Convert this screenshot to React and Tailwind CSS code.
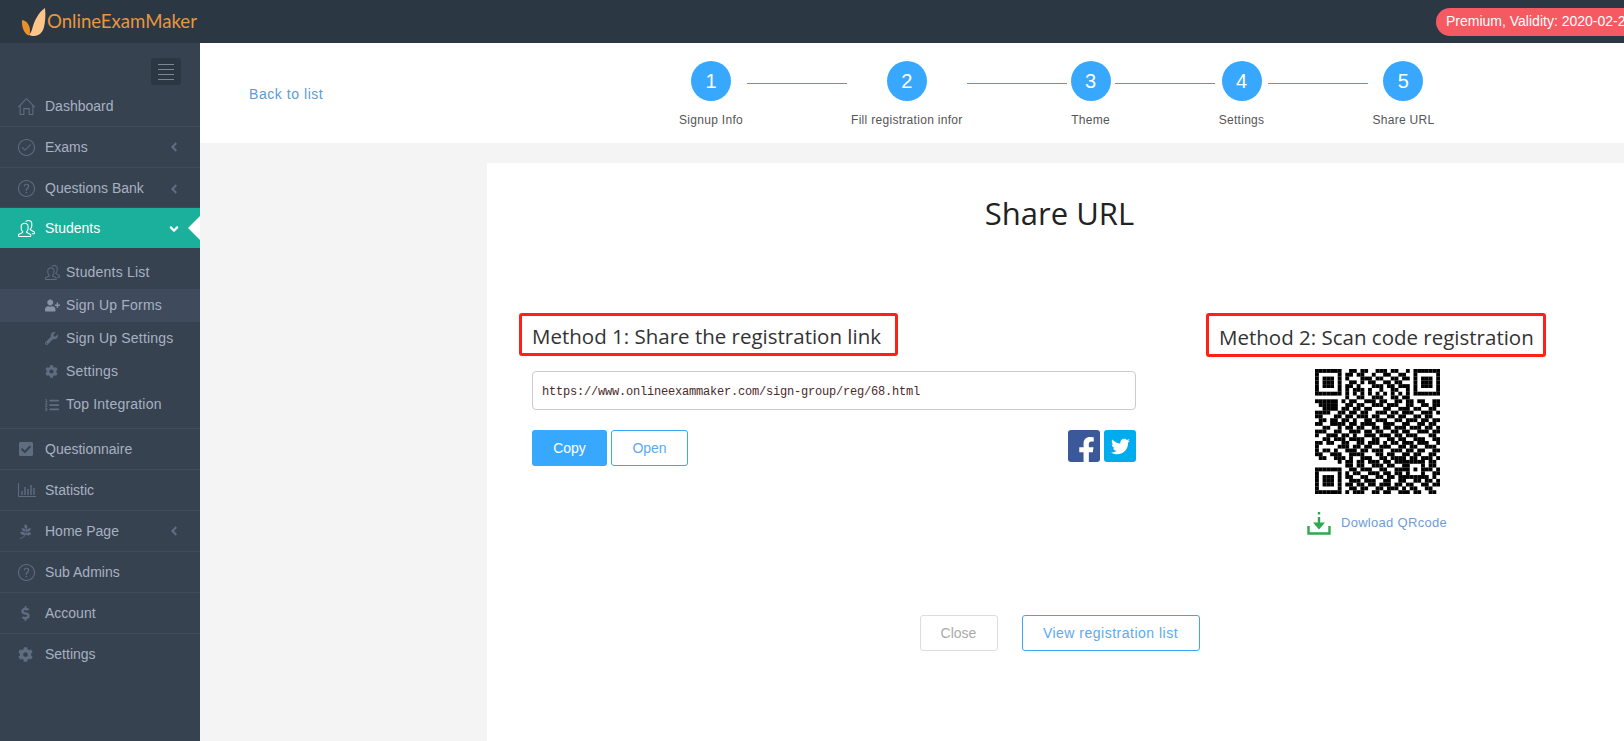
import React from 'react';
import { FaAngleLeft, FaAngleDown, FaCheckSquare, FaCog, FaDollarSign, FaFacebookF, FaListOl, FaPagelines, FaTwitter, FaUserPlus, FaWrench } from 'react-icons/fa';
import { SlCheck, SlHome, SlPeople, SlQuestion } from 'react-icons/sl';

const BarsIcon = ({ className }) => (
  <svg className={className} viewBox="0 0 18 14" width="18" height="14" fill="none" stroke="currentColor" strokeWidth="1">
    <path d="M.5 0v13.5H18" />
    <path d="M4 12V8M7 12V4M10 12V6M13 12V2M16 12V5" strokeWidth="1.4" />
  </svg>
);

const menuTop = [
  { label: 'Dashboard', icon: SlHome, size: 'text-[17px]' },
  { label: 'Exams', icon: SlCheck, size: 'text-[17px]', arrow: true },
  { label: 'Questions Bank', icon: SlQuestion, size: 'text-[17px]', arrow: true, short: true },
];

const subMenu = [
  { label: 'Students List', icon: SlPeople, size: 'text-[15px]' },
  { label: 'Sign Up Forms', icon: FaUserPlus, size: 'text-[15px]', active: true },
  { label: 'Sign Up Settings', icon: FaWrench, size: 'text-[13px]' },
  { label: 'Settings', icon: FaCog, size: 'text-[13px]' },
  { label: 'Top Integration', icon: FaListOl, size: 'text-[14px]' },
];

const menuBottom = [
  { label: 'Questionnaire', icon: FaCheckSquare, size: 'text-[16px]' },
  { label: 'Statistic', icon: BarsIcon, size: '' },
  { label: 'Home Page', icon: FaPagelines, size: 'text-[15px]', arrow: true },
  { label: 'Sub Admins', icon: SlQuestion, size: 'text-[17px]' },
  { label: 'Account', icon: FaDollarSign, size: 'text-[15px]' },
  { label: 'Settings', icon: FaCog, size: 'text-[15px]', last: true },
];

const steps = ['Signup Info', 'Fill registration infor', 'Theme', 'Settings', 'Share URL'];

const qrRows = [
  '111111100110110011101100101111111',
  '100000101101100100110011000100000'.slice(0, 26) + '1000001',
  '101110101000111011001101101011101',
  '101110100110101100110110001011101',
  '101110101101000111011011101011101',
  '100000101011101001001100101000001',
  '111111101010101010101010101111111',
  '000000001001100111001101100000000',
  '111111010110011101100110110110011',
  '011111001101100111011100110011011',
  '001111011011011000110011101100110',
  '111100110110110011101101110011101',
  '110001101101110110011011001101100',
  '011011011010011011100110111011011',
  '110011110110111100111001100110110',
  '001100101101100110110111011101101',
  '111001100111011011001101100111011',
  '100111011010011101110110111000110',
  '001101110111100110011011001110011',
  '110110011001101110101101110111001',
  '100000111011011001110011011001110',
  '101101001110110111001110110110011',
  '110011100111100011011001101100110',
  '011001110100111001101111011011101',
  '000000101101101110110111111110110',
  '000000001101100111011001100010110',
  '111111100110111001100111101011101',
  '100000101011001110110110100010011',
  '101110101100110011011011111111010',
  '101110100111011100110011001101101',
  '101110101101101101110110110011011',
  '100000100110110011011101011001100',
  '111111101011100110110011101100110',
];

const QrCode = () => (
  <svg width="125" height="125" viewBox="0 0 33 33" fill="#000">
    {qrRows.map((row, y) =>
      row.split('').map((cell, x) => (cell === '1' ? <rect key={`${x}-${y}`} x={x} y={y} width="1.02" height="1.02" /> : null))
    )}
  </svg>
);

const LeafLogo = () => (
  <svg width="26" height="30" viewBox="0 0 26 30">
    <path d="M1 13C6 14 9 18 9 24c0 2-.4 3.500-1 4.500C3 27 .5 20 1 13z" fill="#ef8f2a" />
    <path d="M24 1c1 8 0 14-1 19-1 5-5 9-10 9-2 0-4-.5-5-1 2-2 3-5 4-9 1-3 2-6 4-9 2-4 5-7 8-9z" fill="#fcc68a" />
  </svg>
);

const MenuRow = ({ item, active }) => {
  const Icon = item.icon;
  return (
    <div className={`relative flex items-center pl-[18px] pr-[19px] border-b ${active || item.short ? 'h-[40px] pt-[2px]' : 'h-[41px]'} ${active ? 'bg-[#1bb09b] text-white border-transparent' : 'text-[#a7b1c2] border-[#414c5b]'} ${item.last ? 'border-transparent' : ''}`}>
      <span className={`w-[27px] shrink-0 flex ${active ? 'text-white' : 'text-[#5f6d80]'} ${item.size}`}>
        <Icon />
      </span>
      <span className="text-[14px]">{item.label}</span>
      {item.arrow && <FaAngleLeft className="ml-auto text-[14px] text-[#5f6d80]" />}
      {active && <FaAngleDown className="ml-auto text-[14px] text-white" />}
      {active && <span className="absolute right-0 top-[8px] w-0 h-0 border-y-[12px] border-r-[12px] border-y-transparent border-r-white" />}
    </div>
  );
};

const App = () => {
  return (
    <div className="w-[1624px] h-[741px] overflow-hidden flex flex-col font-['Liberation_Sans',sans-serif] bg-white">
      {/* Top bar */}
      <div className="h-[43px] shrink-0 bg-[#2c3744] flex items-center">
        <div className="w-[1436px] shrink-0 flex items-center pl-[21px]">
          <LeafLogo />
          <span className="text-[18.6px] leading-none text-[#e8963f] font-['Lato',sans-serif]">OnlineExamMaker</span>
        </div>
        <div className="h-[28px] shrink-0 pl-[10px] pr-6 rounded-l-full bg-[#f55a63] text-white text-[14px] flex items-center whitespace-nowrap">
          Premium, Validity: 2020-02-28
        </div>
      </div>

      <div className="flex flex-1 min-h-0">
        {/* Sidebar */}
        <div className="w-[200px] shrink-0 bg-[#374250]">
          <div className="h-[43px] pt-[15px] pl-[151px]">
            <div className="w-[30px] h-[27px] rounded-[3px] bg-[#2c3744] flex flex-col items-center justify-center gap-[4px]">
              <span className="w-4 h-px bg-[#7b8797]" />
              <span className="w-4 h-px bg-[#7b8797]" />
              <span className="w-4 h-px bg-[#7b8797]" />
              <span className="w-4 h-px bg-[#7b8797]" />
            </div>
          </div>
          {menuTop.map((item) => (
            <MenuRow key={item.label} item={item} />
          ))}
          <MenuRow item={{ label: 'Students', icon: SlPeople, size: 'text-[17px]' }} active />
          <div className="pt-[8px] pb-[7px] border-b border-[#414c5b]">
            {subMenu.map((item) => {
              const Icon = item.icon;
              return (
                <div key={item.label} className={`h-[33px] flex items-center pl-[45px] text-[14px] tracking-[0.2px] text-[#a7b1c2] ${item.active ? 'bg-[#3f4b5c]' : ''}`}>
                  <span className={`w-[21px] shrink-0 flex text-[#5f6d80] ${item.active ? 'text-[#8794a8]' : ''} ${item.size}`}>
                    <Icon />
                  </span>
                  {item.label}
                </div>
              );
            })}
          </div>
          {menuBottom.map((item) => (
            <MenuRow key={item.label} item={item} />
          ))}
        </div>

        <div className="flex-1 min-w-0 flex flex-col">
          {/* Steps */}
          <div className="h-[100px] shrink-0 bg-white flex">
            <div className="w-[479px] shrink-0 pl-[49px] pt-[41px] text-[14px] tracking-[0.55px] text-[#5b9bd5]">Back to list</div>
            <div className="flex items-start gap-1 pt-[18px]">
              {steps.map((label, i) => (
                <React.Fragment key={label}>
                  <div className="flex flex-col items-center">
                    <div className="w-10 h-10 rounded-full bg-[#38a8ff] text-white text-[20px] flex items-center justify-center">{i + 1}</div>
                    <div className="mt-[10px] text-[12px] tracking-[0.3px] text-[#555] whitespace-nowrap">{label}</div>
                  </div>
                  {i < 4 && <div className="w-[100px] h-px mt-[22px] bg-[#3f9fee]" />}
                </React.Fragment>
              ))}
            </div>
          </div>

          {/* Card */}
          <div className="flex-1 min-h-0 bg-[#f4f4f4] pt-5 pl-[287px]">
            <div className="h-full bg-white pt-[30px]">
              <h1 className="pl-2 text-center text-[31px] leading-10 text-[#222] font-['Open_Sans',sans-serif]">Share URL</h1>
              <div className="flex mt-[80px] font-['Open_Sans',sans-serif]">
                <div className="ml-[45px] w-[604px] shrink-0">
                  <div className="-ml-[13px] w-[379px] h-[43px] border-[3px] border-[#ff2016] rounded-[3px] pl-[10px] pt-[4px] flex items-center text-[20.5px] text-[#333] whitespace-nowrap">
                    Method 1: Share the registration link
                  </div>
                  <div className="mt-[15px] h-[39px] border border-[#ccc] rounded-[4px] pl-[9px] pt-[3px] flex items-center font-['Liberation_Mono',monospace] text-[12px] tracking-[-0.2px] text-[#4a2a2a]">
                    https://www.onlineexammaker.com/sign-group/reg/68.html
                  </div>
                  <div className="mt-[20px] flex items-start font-['Liberation_Sans',sans-serif] text-[14px]">
                    <button className="w-[75px] h-9 rounded-[3px] bg-[#38a8ff] text-white">Copy</button>
                    <button className="ml-[4px] w-[77px] h-9 rounded-[3px] border border-[#38a8ff] text-[#5aa9f5]">Open</button>
                    <div className="ml-auto flex gap-1">
                      <div className="w-8 h-8 rounded-[3px] bg-[#3b5998] text-white flex items-end justify-center overflow-hidden">
                        <FaFacebookF className="text-[27px] -mb-[2px] ml-[4px]" />
                      </div>
                      <div className="w-8 h-8 rounded-[3px] bg-[#00aced] text-white flex items-center justify-center">
                        <FaTwitter className="text-[19px]" />
                      </div>
                    </div>
                  </div>
                </div>
                <div className="ml-[83px] w-[317px] shrink-0 flex flex-col items-center">
                  <div className="self-start -ml-[13px] w-[340px] h-[44px] border-[3px] border-[#ff2016] rounded-[3px] pl-[10px] pt-[4px] flex items-center text-[20.5px] text-[#333] whitespace-nowrap">
                    Method 2: Scan code registration
                  </div>
                  <div className="mt-[12px] h-[125px]">
                    <QrCode />
                  </div>
                  <div className="mt-[17px] -ml-[1px] flex items-center font-['Liberation_Sans',sans-serif]">
                    <svg width="24" height="24" viewBox="0 0 24 24" fill="none" stroke="#2fa84f" strokeWidth="2.4">
                      <path d="M1.500 15v7.500h21V15" />
                      <path d="M12 1v2.500M12 6v9" />
                      <path d="M6 11.500h12L12 18.500z" fill="#2fa84f" stroke="none" />
                    </svg>
                    <span className="ml-[10px] text-[13px] tracking-[0.3px] text-[#6f9bd8]">Dowload QRcode</span>
                  </div>
                </div>
              </div>
              <div className="pl-2 mt-[80px] flex justify-center gap-6 font-['Liberation_Sans',sans-serif] text-[14px]">
                <button className="w-[78px] h-9 rounded-[3px] border border-[#ddd] text-[#aaa]">Close</button>
                <button className="w-[178px] h-9 rounded-[3px] border border-[#38a8ff] tracking-[0.5px] text-[#5aa9f5]">View registration list</button>
              </div>
            </div>
          </div>
        </div>
      </div>
    </div>
  );
};

export default App;
